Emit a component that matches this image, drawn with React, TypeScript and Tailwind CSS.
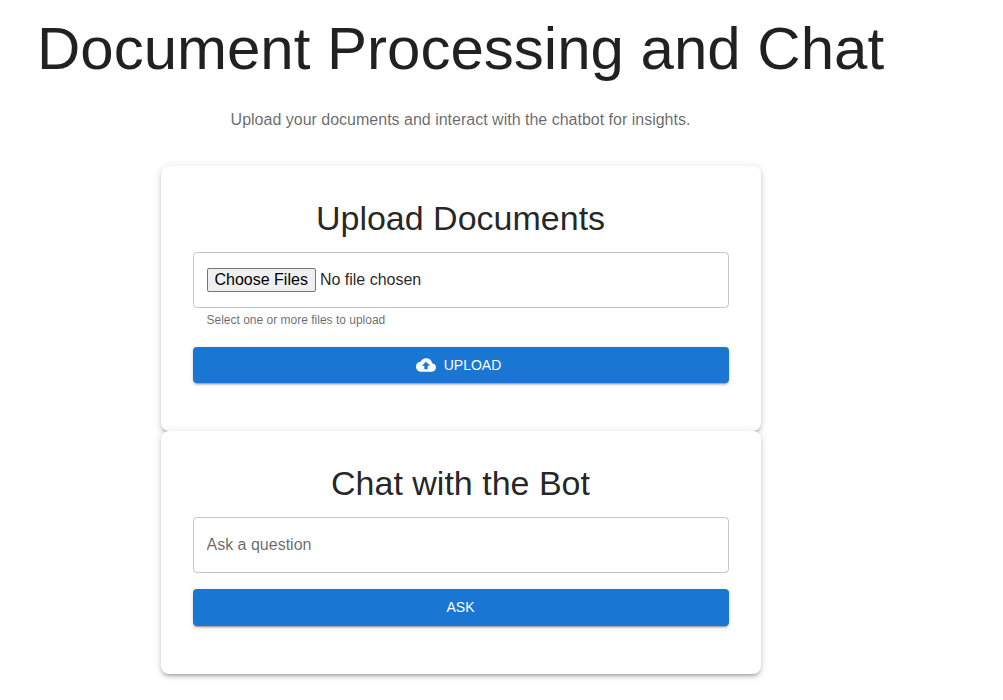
import { MdCloudUpload } from "react-icons/md";

const paper =
  "w-[600px] rounded-lg bg-white p-8 text-center shadow-[0px_3px_3px_-2px_rgba(0,0,0,0.2),0px_3px_4px_0px_rgba(0,0,0,0.14),0px_1px_8px_0px_rgba(0,0,0,0.12)]";
const button =
  "flex w-full items-center justify-center rounded bg-[#1976d2] text-sm font-medium text-white uppercase shadow-[0px_3px_1px_-2px_rgba(0,0,0,0.2),0px_2px_2px_0px_rgba(0,0,0,0.14),0px_1px_5px_0px_rgba(0,0,0,0.12)]";

export default function App() {
  return (
    <main className="flex h-[700px] w-[921px] flex-col items-center bg-white font-['Liberation_Sans',sans-serif] text-black/87">
      <h1 className="mt-3.5 text-[60px] leading-[70px] whitespace-nowrap">
        Document Processing and Chat
      </h1>
      <p className="mt-6 text-base leading-6 text-black/60">
        Upload your documents and interact with the chatbot for insights.
      </p>
      <section className={`${paper} mt-[34px] h-[265px]`}>
        <h2 className="text-[34px] leading-10">Upload Documents</h2>
        <div className="mt-3.5 flex h-14 items-center rounded border border-black/23 px-[13px]">
          <button className="h-6 rounded-[2px] border border-[#767676] bg-[#efefef] px-[7px] text-base leading-5 text-black">
            Choose Files
          </button>
          <span className="ml-1 text-base">No file chosen</span>
        </div>
        <p className="mt-0.5 ml-3.5 text-left text-xs leading-5 text-black/60">
          Select one or more files to upload
        </p>
        <button className={`${button} mt-[17px] h-9`}>
          <MdCloudUpload className="mr-2 -ml-1 size-5" />
          Upload
        </button>
      </section>
      <section className={`${paper} h-[243px]`}>
        <h2 className="text-[34px] leading-10">Chat with the Bot</h2>
        <input
          aria-label="Ask a question"
          placeholder="Ask a question"
          className="mt-3.5 block h-14 w-full rounded border border-black/23 px-[13px] text-base outline-none placeholder:text-black/60"
        />
        <button className={`${button} mt-4 h-[37px] pb-px`}>Ask</button>
      </section>
    </main>
  );
}
